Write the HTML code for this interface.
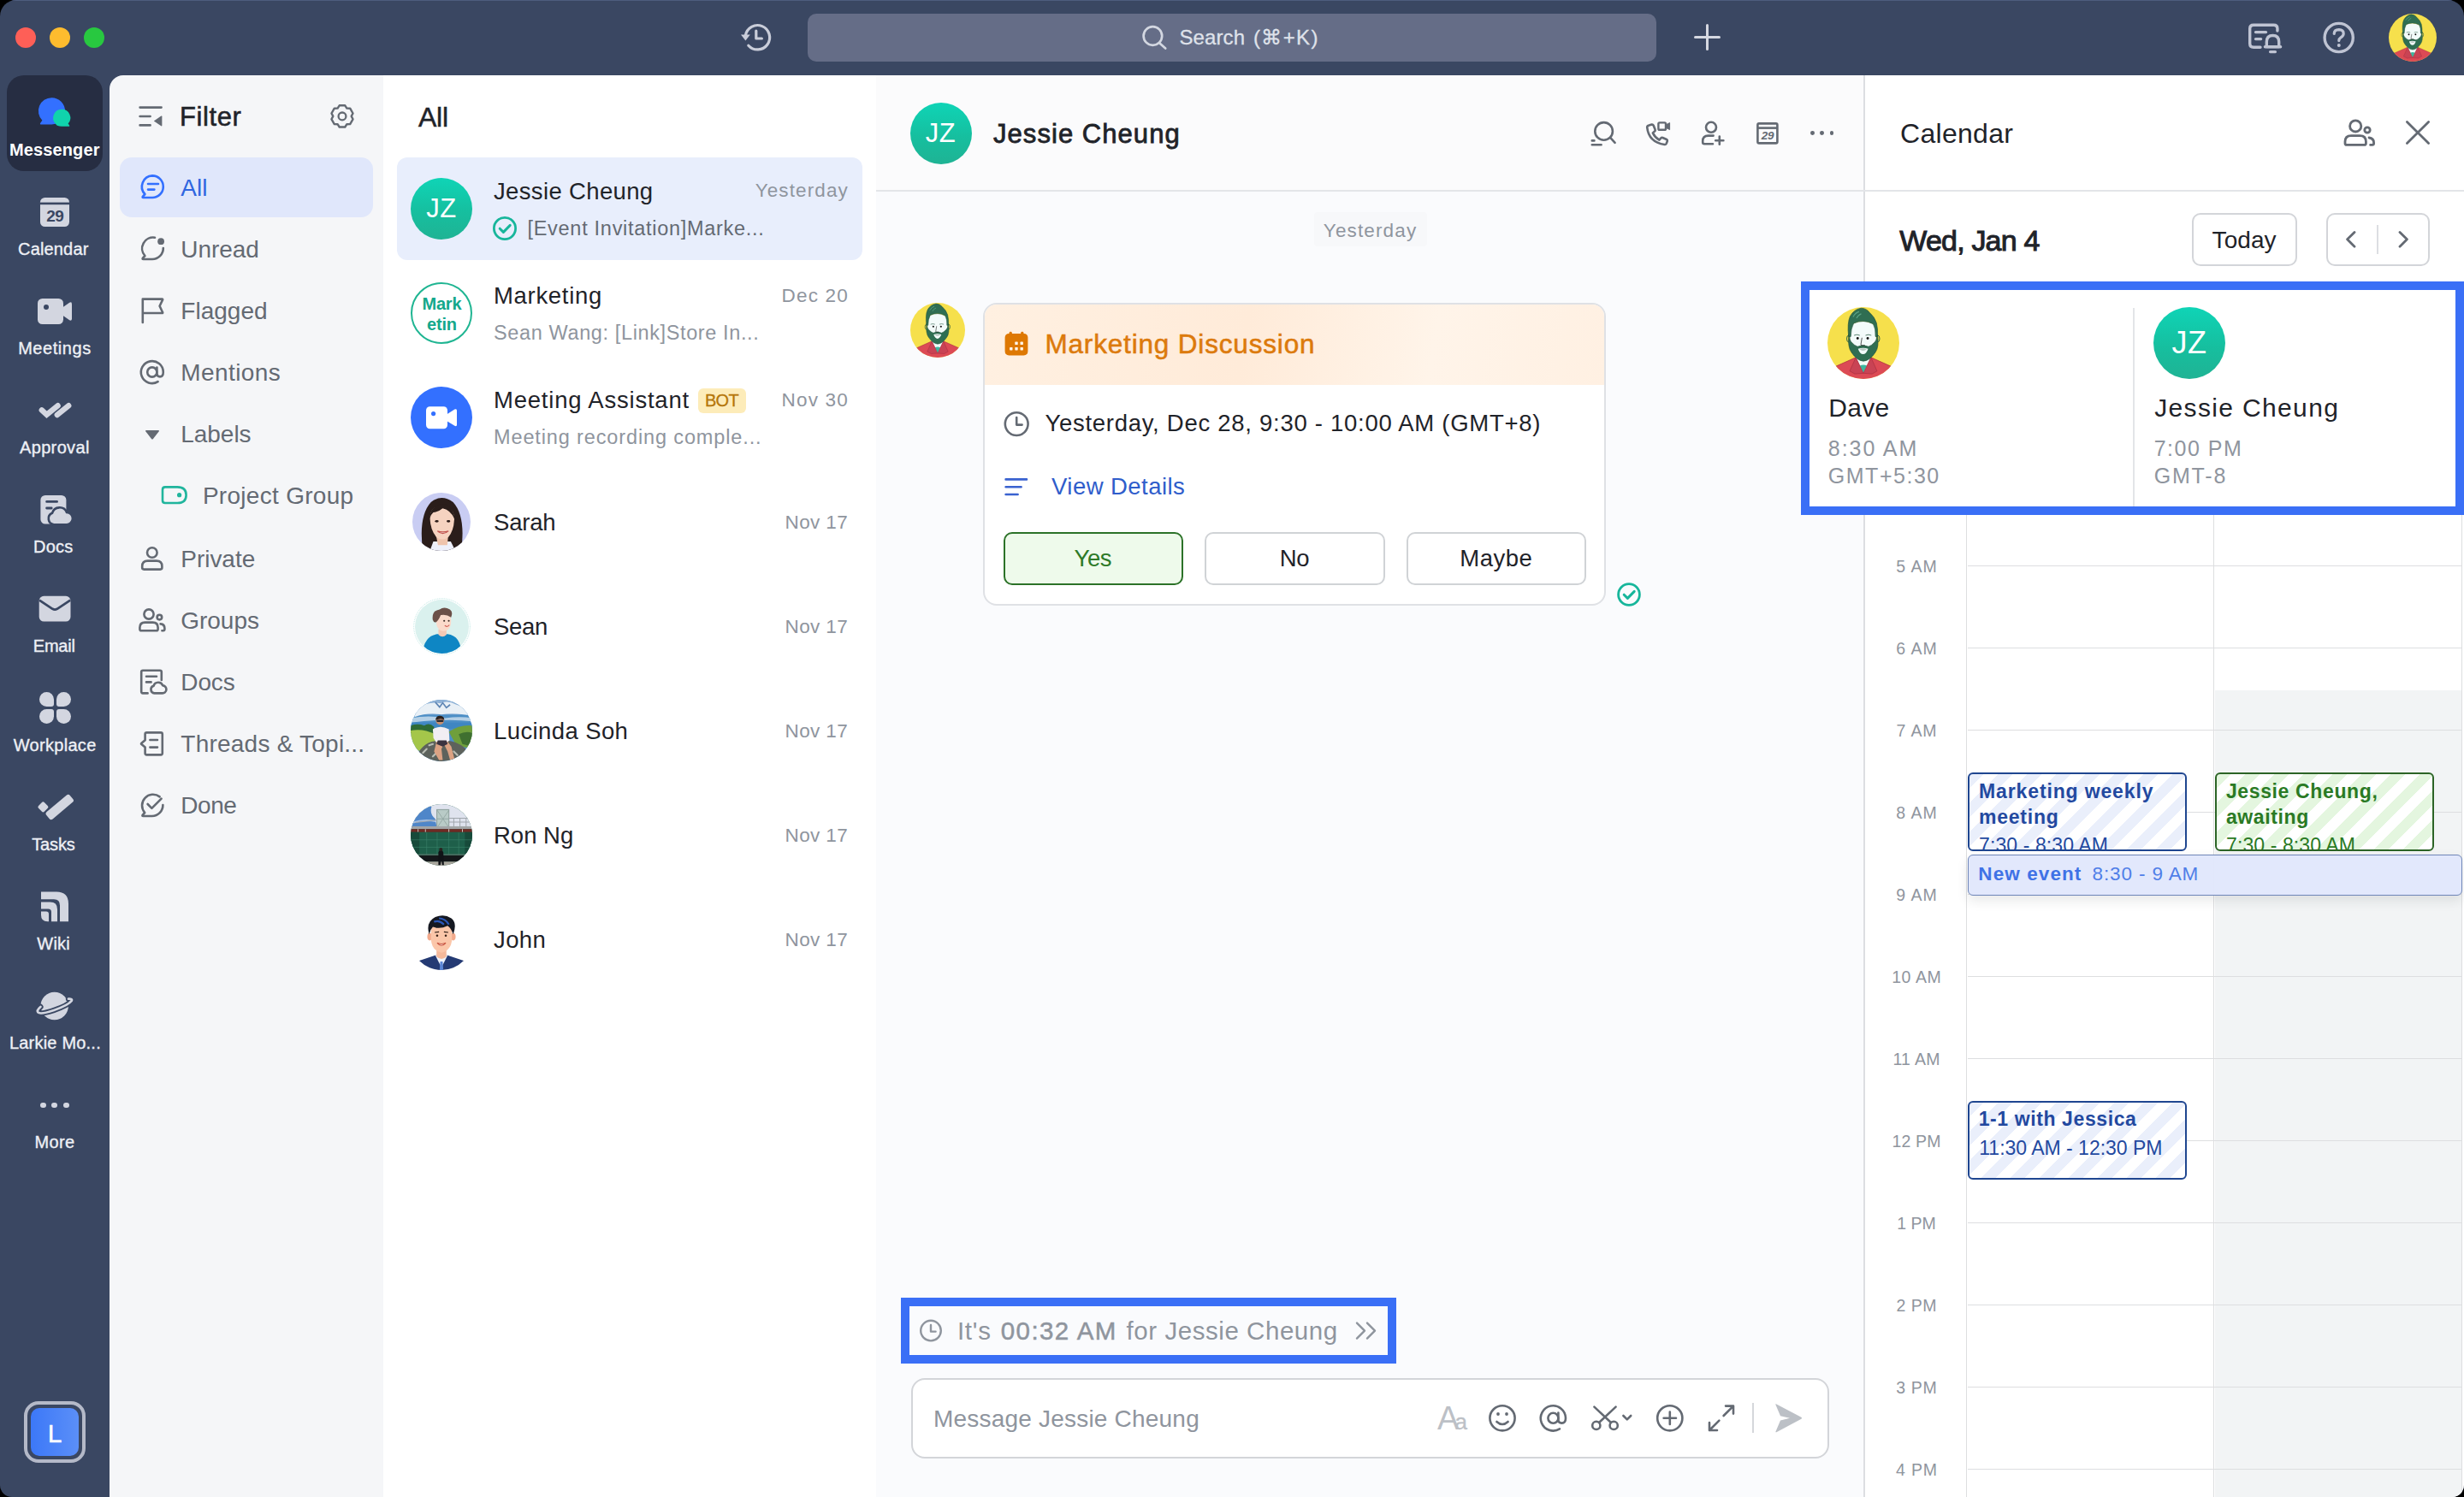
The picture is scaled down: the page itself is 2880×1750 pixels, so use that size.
<!DOCTYPE html>
<html lang="en"><head><meta charset="utf-8"><title>Messenger</title>
<style>
html,body{margin:0;padding:0;background:#000;}
body{width:2880px;height:1750px;overflow:hidden;position:relative;font-family:"Liberation Sans",sans-serif;}
.win{position:absolute;left:0;top:0;width:2880px;height:1750px;background:#3a4762;border-radius:19px 19px 14px 14px;overflow:hidden;}
.win:before{content:"";position:absolute;left:0;top:0;width:100%;height:1px;background:#56668a;opacity:.7}
.a{position:absolute;display:block;}
.t{white-space:nowrap;}
svg{overflow:visible;}
</style></head>
<body><div class="win">
<div class="a" style="left:18px;top:32px;width:24px;height:24px;background:#fe5f57;border-radius:50%;"></div>
<div class="a" style="left:58px;top:32px;width:24px;height:24px;background:#febc2e;border-radius:50%;"></div>
<div class="a" style="left:98px;top:32px;width:24px;height:24px;background:#28c840;border-radius:50%;"></div>
<svg class="a" style="left:860px;top:20px;" width="50" height="48" viewBox="860 20 50 48"><g fill="none" stroke="#c9cdd9" stroke-width="3.2" stroke-linecap="round" stroke-linejoin="round">
<path d="M871.4,41.5 A14.2,14.2 0 1 1 874.8,53.2"/>
<path d="M883.8,36 L883.8,45 L890.4,45"/></g>
<path d="M866,40.4 L876.8,40.4 L871.4,47.4 Z" fill="#c9cdd9"/></svg>
<div class="a" style="left:944px;top:16px;width:992px;height:56px;background:#656d87;border-radius:10px;"></div>
<svg class="a" style="left:1328px;top:24px;" width="42" height="40" viewBox="1328 24 42 40"><g fill="none" stroke="#d3d7e1" stroke-width="2.7" stroke-linecap="round"><circle cx="1347.4" cy="42" r="10.8"/><path d="M1355.4,50.4 L1362.2,56.6"/></g></svg>
<div class="a t" style="top:28.0px;font-size:24px;line-height:31px;color:#dfe2ea;letter-spacing:0.13px;-webkit-text-stroke:0.3px #dfe2ea;left:1378.4px;"><span>Search</span></div>
<div class="a t" style="top:28.0px;font-size:24px;line-height:31px;color:#dfe2ea;letter-spacing:1.36px;-webkit-text-stroke:0.3px #dfe2ea;left:1465px;"><span>(⌘+K)</span></div>
<svg class="a" style="left:1975px;top:24px;" width="40" height="40" viewBox="1975 24 40 40"><path d="M1995.5,29.5 V57.5 M1981.5,43.5 H2009.5" stroke="#d5d8e1" stroke-width="3" stroke-linecap="round" fill="none"/></svg>
<svg class="a" style="left:2620px;top:20px;" width="52" height="48" viewBox="2620 20 52 48"><g fill="none" stroke="#bfc4d3" stroke-width="3.4" stroke-linecap="round" stroke-linejoin="round">
<path d="M2642,55.2 H2634 Q2629.7,55.2 2629.7,51 V33.5 Q2629.7,29.3 2634,29.3 H2657.6 Q2661.9,29.3 2661.9,33.5 V36"/>
<path d="M2636.5,37.6 H2648.5 M2636.5,45.6 H2642.6"/>
<path d="M2656.5,41.5 Q2649.3,41.5 2649.3,49 V54.6 H2663.7 V49 Q2663.7,41.5 2656.5,41.5 Z"/>
<path d="M2647.4,54.8 H2665.6 M2653.6,60.6 H2659.4"/></g></svg>
<svg class="a" style="left:2710px;top:20px;" width="50" height="48" viewBox="2710 20 50 48"><circle cx="2733.7" cy="44" r="16.6" fill="none" stroke="#bfc4d3" stroke-width="3.4"/>
<path d="M2728.2,39.4 Q2728.4,34.6 2733.8,34.6 Q2739.2,34.8 2739.2,39.2 Q2739.2,42 2736,43.8 Q2733.8,45.2 2733.8,47.6" fill="none" stroke="#bfc4d3" stroke-width="3.2" stroke-linecap="round"/>
<circle cx="2733.8" cy="53" r="2" fill="#bfc4d3"/></svg>
<svg class="a" style="left:2792px;top:16px" width="56" height="56" viewBox="0 0 100 100">
<clipPath id="dv1"><circle cx="50" cy="50" r="50"/></clipPath>
<g clip-path="url(#dv1)">
<rect width="100" height="100" fill="#f6e04c"/>
<path d="M8,84 Q26,76 39.5,70 L50,78 L60.5,70 Q74,76 92,84 L92,101 L8,101 Z" fill="#dc4a55" stroke="#a52c3c" stroke-width="0.8"/>
<path d="M39.5,70 L50,92 L60.5,70 L57,62 L43,62 Z" fill="#f2fbf9"/>
<path d="M45,81.5 L50,92 L55,81.5 Q50,79.5 45,81.5 Z" fill="#3db79f"/>
<path d="M39.5,70 L31,89 L38,93 L50,92 Z" fill="#c94354" stroke="#a52c3c" stroke-width="0.7"/>
<path d="M60.5,70 L69,89 L62,93 L50,92 Z" fill="#c94354" stroke="#a52c3c" stroke-width="0.7"/>
<ellipse cx="29.4" cy="44" rx="2.6" ry="4.6" fill="#f6e04c" stroke="#2a5d45" stroke-width="1.1"/>
<ellipse cx="70" cy="44" rx="2.6" ry="4.6" fill="#f6e04c" stroke="#2a5d45" stroke-width="1.1"/>
<path d="M31.5,26 Q49,14 67,26 L68,50 Q66,72 49.5,75 Q33,72 31.5,50 Z" fill="#f3fbfa"/>
<path d="M29.6,38 Q30.5,46 33,48.5 Q38,54 42,55 Q49.4,51.6 57,55 Q61,54 66,48.5 Q68.5,46 69.6,38 Q72,56 66.6,63 Q59,74.6 50,75.2 Q41,74.6 33.4,63 Q28,56 29.6,38 Z" fill="#2f6e52" stroke="#1f5039" stroke-width="0.8"/>
<path d="M42.6,58 Q49.6,55.4 56.6,58 Q54,65.4 49.6,65.6 Q45,65.4 42.6,58 Z" fill="#f3fbfa"/>
<path d="M44.2,58.4 Q49.6,56.6 55,58.4 Q49.6,63 44.2,58.4 Z" fill="#b9c7c3"/>
<path d="M29.4,41 Q27.4,22 31.4,13 Q36.5,3.2 46.8,1.4 Q54,1.6 58.6,7.6 Q65.6,13.6 68.2,22 Q70.2,30 69.8,41 L66.8,41 Q67.4,30 63.6,23.4 Q50,16.4 36.4,22.6 Q32.4,30 32.4,41 Z" fill="#2f6e52" stroke="#1f5039" stroke-width="0.8"/>
<path d="M35.6,13.6 Q39,7.6 44,6.4 M40.4,15.6 Q43,10.6 47,9.4" stroke="#5aa184" stroke-width="1.3" fill="none"/>
<circle cx="42" cy="43.4" r="1.7" fill="#111"/><circle cx="56" cy="43.4" r="1.7" fill="#111"/>
<path d="M37,39.3 Q41,37.4 45,39.3 M53,39.3 Q57,37.4 61,39.3" stroke="#2a5d45" stroke-width="0.9" fill="none"/>
<path d="M48,42.6 L46.4,52.6 Q49,54.4 52,53" stroke="#222" stroke-width="0.9" fill="none"/>
</g></svg>
<div class="a" style="left:8px;top:88px;width:112px;height:112px;background:#262d42;border-radius:20px;"></div>
<div class="a t" style="top:161.8px;font-size:20px;line-height:26px;color:#ffffff;font-weight:700;letter-spacing:0.14px;left:-536.3px;width:1200px;text-align:center;margin-left:0.07px;"><span>Messenger</span></div>
<div class="a t" style="top:277.8px;font-size:20px;line-height:26px;color:#eef0f5;letter-spacing:0.17px;-webkit-text-stroke:0.35px #eef0f5;left:-537.8px;width:1200px;text-align:center;margin-left:0.08px;"><span>Calendar</span></div>
<div class="a t" style="top:393.8px;font-size:20px;line-height:26px;color:#eef0f5;letter-spacing:0.56px;-webkit-text-stroke:0.35px #eef0f5;left:-536.3px;width:1200px;text-align:center;margin-left:0.28px;"><span>Meetings</span></div>
<div class="a t" style="top:509.8px;font-size:20px;line-height:26px;color:#eef0f5;letter-spacing:0.35px;-webkit-text-stroke:0.35px #eef0f5;left:-536.3px;width:1200px;text-align:center;margin-left:0.17px;"><span>Approval</span></div>
<div class="a t" style="top:625.8px;font-size:20px;line-height:26px;color:#eef0f5;letter-spacing:0.21px;-webkit-text-stroke:0.35px #eef0f5;left:-537.9px;width:1200px;text-align:center;margin-left:0.10px;"><span>Docs</span></div>
<div class="a t" style="top:741.8px;font-size:20px;line-height:26px;color:#eef0f5;letter-spacing:-0.24px;-webkit-text-stroke:0.35px #eef0f5;left:-536.7px;width:1200px;text-align:center;margin-left:-0.12px;"><span>Email</span></div>
<div class="a t" style="top:857.8px;font-size:20px;line-height:26px;color:#eef0f5;letter-spacing:0.31px;-webkit-text-stroke:0.35px #eef0f5;left:-536px;width:1200px;text-align:center;margin-left:0.15px;"><span>Workplace</span></div>
<div class="a t" style="top:973.8px;font-size:20px;line-height:26px;color:#eef0f5;letter-spacing:-0.12px;-webkit-text-stroke:0.35px #eef0f5;left:-537.5px;width:1200px;text-align:center;margin-left:-0.06px;"><span>Tasks</span></div>
<div class="a t" style="top:1089.8px;font-size:20px;line-height:26px;color:#eef0f5;letter-spacing:0.18px;-webkit-text-stroke:0.35px #eef0f5;left:-537.5px;width:1200px;text-align:center;margin-left:0.09px;"><span>Wiki</span></div>
<div class="a t" style="top:1205.8px;font-size:20px;line-height:26px;color:#eef0f5;letter-spacing:0.21px;-webkit-text-stroke:0.35px #eef0f5;left:-535.7px;width:1200px;text-align:center;margin-left:0.10px;"><span>Larkie Mo...</span></div>
<div class="a t" style="top:1321.8px;font-size:20px;line-height:26px;color:#eef0f5;letter-spacing:0.33px;-webkit-text-stroke:0.35px #eef0f5;left:-536.1px;width:1200px;text-align:center;margin-left:0.17px;"><span>More</span></div>
<svg class="a" style="left:36px;top:106px;" width="56" height="50" viewBox="36 106 56 50"><path d="M60.4,114.2 A15.6,15.6 0 0 1 60.4,145.4 H48.4 Q46,145.4 47.4,143.4 L49.4,140.8 A15.6,15.6 0 0 1 60.4,114.2 Z" fill="#3370ff"/>
<path d="M72.2,127.8 A10,10 0 0 0 65.2,145 Q66.4,147.8 72.2,147.8 H80 Q82,147.8 80.9,146.2 L79.6,144.6 A10,10 0 0 0 72.2,127.8 Z" fill="#10d3ac"/></svg>
<svg class="a" style="left:40px;top:226px;" width="50" height="44" viewBox="40 226 50 44"><rect x="47" y="231" width="34" height="34" rx="5.5" fill="#d3d6e0"/>
<rect x="47" y="236.6" width="34" height="2.6" fill="#3a4762"/></svg>
<div class="a t" style="top:240.1px;font-size:19px;line-height:25px;color:#3a4762;font-weight:700;left:-535.8px;width:1200px;text-align:center;letter-spacing:-0.5px;"><span>29</span></div>
<svg class="a" style="left:40px;top:344px;" width="50" height="40" viewBox="40 344 50 40"><rect x="44" y="349" width="30" height="30" rx="5.5" fill="#d3d6e0"/>
<path d="M73,359.5 L81.2,353.8 Q84,352.4 84,355.4 V372.6 Q84,375.6 81.2,374.2 L73,368.5 Z" fill="#d3d6e0"/>
<circle cx="54" cy="359" r="3" fill="#3a4762"/></svg>
<svg class="a" style="left:40px;top:464px;" width="50" height="32" viewBox="40 464 50 32"><g stroke="#d3d6e0" stroke-width="6.4" stroke-linecap="round" fill="none">
<path d="M48.8,479.4 L54.6,484.8 L67.6,474.2"/><path d="M66.8,485 L80.2,474.2"/></g></svg>
<svg class="a" style="left:40px;top:574px;" width="50" height="44" viewBox="40 574 50 44"><rect x="47.4" y="579" width="30" height="33.6" rx="5.5" fill="#d3d6e0"/>
<path d="M54.6,586.4 H66.6 M54.6,594 H60.2" stroke="#3a4762" stroke-width="2.8" stroke-linecap="round"/>
<path d="M63,614 A7,7 0 0 1 61,600.6 A9,9 0 0 1 78,599.8 A7,7 0 0 1 77.6,614 Z" fill="#d3d6e0" stroke="#3a4762" stroke-width="2.6" transform="translate(0,-0.8)"/></svg>
<svg class="a" style="left:40px;top:692px;" width="50" height="40" viewBox="40 692 50 40"><rect x="45.7" y="696.8" width="36.8" height="29.8" rx="5.5" fill="#d3d6e0"/>
<path d="M46,701.6 L61.4,711.8 Q64.1,713.4 66.8,711.8 L82.2,701.6" fill="none" stroke="#3a4762" stroke-width="2.8"/></svg>
<div class="a" style="left:45.7px;top:809px;width:17.2px;height:17.2px;background:#d3d6e0;border-radius:8.6px 8.6px 3px 8.6px;"></div>
<div class="a" style="left:65.5px;top:809px;width:17.2px;height:17.2px;background:#d3d6e0;border-radius:8.6px 8.6px 8.6px 3px;"></div>
<div class="a" style="left:45.7px;top:828.8px;width:17.2px;height:17.2px;background:#d3d6e0;border-radius:8.6px 3px 8.6px 8.6px;"></div>
<div class="a" style="left:65.5px;top:828.8px;width:17.2px;height:17.2px;background:#d3d6e0;border-radius:3px 8.6px 8.6px 8.6px;"></div>
<svg class="a" style="left:40px;top:926px;" width="50" height="36" viewBox="40 926 50 36"><rect x="-5.4" y="-14.6" width="10.8" height="36" rx="2.8" transform="translate(69.6,943.6) rotate(50) translate(0,-3.6)" fill="#d3d6e0"/>
<rect x="-4.8" y="-4.8" width="9.6" height="9.6" rx="2" transform="translate(50.4,943.4) rotate(45)" fill="#d3d6e0"/></svg>
<svg class="a" style="left:40px;top:1038px;" width="50" height="44" viewBox="40 1038 50 44"><path d="M48,1042.4 H66 Q80,1042.4 80,1056.4 V1077.3 H70 V1058.4 Q70,1051.2 63,1051.2 H48 Z" fill="#d3d6e0"/>
<path d="M48,1054.6 H58.6 Q67,1054.6 67,1063 V1077.3 H60 V1066 Q60,1062.4 56.4,1062.4 H48 Z" fill="#d3d6e0"/>
<path d="M48,1065.6 H54 Q57,1065.6 57,1068.6 V1077.3 H55.6 Q48,1077.3 48,1069.7 Z" fill="#d3d6e0"/></svg>
<svg class="a" style="left:38px;top:1154px;" width="54" height="46" viewBox="38 1154 54 46"><circle cx="63.7" cy="1176" r="16.2" fill="#d3d6e0"/>
<path d="M47.4,1177 Q42.6,1181 44.4,1183.4 Q47,1186.4 63,1181 Q80,1175 83.6,1170 Q85,1167.4 80,1167.6" fill="none" stroke="#3a4762" stroke-width="6.4" stroke-linecap="round"/>
<path d="M47.4,1177 Q42.6,1181 44.4,1183.4 Q47,1186.4 63,1181 Q80,1175 83.6,1170 Q85,1167.4 80,1167.6" fill="none" stroke="#d3d6e0" stroke-width="2.8" stroke-linecap="round"/></svg>
<div class="a" style="left:46.800000000000004px;top:1288.6px;width:6.8px;height:6.8px;background:#d3d6e0;border-radius:50%;"></div>
<div class="a" style="left:60.4px;top:1288.6px;width:6.8px;height:6.8px;background:#d3d6e0;border-radius:50%;"></div>
<div class="a" style="left:74.0px;top:1288.6px;width:6.8px;height:6.8px;background:#d3d6e0;border-radius:50%;"></div>
<div class="a" style="left:28px;top:1638px;width:72px;height:72px;border-radius:17px;border:4px solid #b4b9c8;box-sizing:border-box;"></div>
<div class="a" style="left:36px;top:1646px;width:56px;height:56px;background:linear-gradient(90deg,#3c78f8,#5b8ff8);border-radius:10px;"></div>
<div class="a t" style="top:1655.5px;font-size:30px;line-height:39px;color:#fff;-webkit-text-stroke:0.4px #fff;left:-536px;width:1200px;text-align:center;"><span>L</span></div>
<div class="a" style="left:128px;top:88px;width:320px;height:1662px;background:#f5f6f8;border-top-left-radius:16px;"></div>
<svg class="a" style="left:156px;top:118px;" width="40" height="36" viewBox="156 118 40 36"><g stroke="#646a73" stroke-width="2.6" stroke-linecap="round" fill="none">
<path d="M163.6,125.6 H188.6 M163.6,136 H175.6 M163.6,146.4 H175.6"/></g>
<path d="M179.8,141.4 L188.4,135.6 Q189.4,135 189.4,136.2 V146.6 Q189.4,147.8 188.4,147.2 Z" fill="#646a73"/></svg>
<div class="a t" style="top:117.2px;font-size:31px;line-height:40px;color:#1f2329;letter-spacing:0.60px;-webkit-text-stroke:0.55px #1f2329;left:210px;"><span>Filter</span></div>
<svg class="a" style="left:380px;top:116px;" width="40" height="40" viewBox="380 116 40 40"><path d="M403.3,123.3 L396.7,123.3 L394.6,126.6 L390.8,126.7 L387.5,132.5 L389.3,135.9 L387.5,139.3 L390.8,145.1 L394.6,145.2 L396.7,148.5 L403.3,148.5 L405.4,145.2 L409.2,145.1 L412.5,139.3 L410.7,135.9 L412.5,132.5 L409.2,126.7 L405.4,126.6 Z" fill="none" stroke="#646a73" stroke-width="2.4" stroke-linejoin="round"/><circle cx="400.0" cy="135.9" r="4.4" fill="none" stroke="#646a73" stroke-width="2.3"/></svg>
<div class="a" style="left:140px;top:184px;width:296px;height:70px;background:#e0e7fb;border-radius:14px;"></div>
<div class="a t" style="top:201.6px;font-size:28px;line-height:36px;color:#2f66e0;letter-spacing:-0.01px;left:211.3px;"><span>All</span></div>
<div class="a t" style="top:273.6px;font-size:28px;line-height:36px;color:#646a73;letter-spacing:-0.07px;left:211.3px;"><span>Unread</span></div>
<div class="a t" style="top:345.6px;font-size:28px;line-height:36px;color:#646a73;letter-spacing:0.02px;left:211.3px;"><span>Flagged</span></div>
<div class="a t" style="top:418.1px;font-size:28px;line-height:36px;color:#646a73;letter-spacing:0.42px;left:211.3px;"><span>Mentions</span></div>
<div class="a t" style="top:490.0px;font-size:28px;line-height:36px;color:#646a73;letter-spacing:-0.05px;left:211.3px;"><span>Labels</span></div>
<div class="a t" style="top:635.9px;font-size:28px;line-height:36px;color:#646a73;letter-spacing:-0.04px;left:211.3px;"><span>Private</span></div>
<div class="a t" style="top:708.4px;font-size:28px;line-height:36px;color:#646a73;letter-spacing:-0.04px;left:211.3px;"><span>Groups</span></div>
<div class="a t" style="top:779.9px;font-size:28px;line-height:36px;color:#646a73;letter-spacing:-0.12px;left:211.3px;"><span>Docs</span></div>
<div class="a t" style="top:852.1px;font-size:28px;line-height:36px;color:#646a73;letter-spacing:0.23px;left:211.3px;"><span>Threads &amp; Topi...</span></div>
<div class="a t" style="top:924.2px;font-size:28px;line-height:36px;color:#646a73;letter-spacing:-0.43px;left:211.3px;"><span>Done</span></div>
<div class="a t" style="top:561.8px;font-size:28px;line-height:36px;color:#646a73;letter-spacing:0.29px;left:236.9px;"><span>Project Group</span></div>
<svg class="a" style="left:160px;top:200px;" width="38" height="38" viewBox="160 200 38 38"><g fill="none" stroke="#3370ff" stroke-width="2.6" stroke-linecap="round" stroke-linejoin="round">
<path d="M178,205.4 A12.8,12.8 0 1 1 178,231 H167.6 Q166,231 167,229.6 L169.4,227 A12.8,12.8 0 0 1 178,205.4 Z"/>
<path d="M173,215 H185 M173,221.6 H180.4"/></g></svg>
<svg class="a" style="left:160px;top:272px;" width="38" height="38" viewBox="160 272 38 38"><g fill="none" stroke="#646a73" stroke-width="2.6" stroke-linecap="round" stroke-linejoin="round">
<path d="M190.8,290 A12.8,12.8 0 0 1 178,303 H167.6 Q166,303 167,301.6 L169.4,299 A12.8,12.8 0 0 1 181,277.8"/></g>
<circle cx="188.1" cy="282.2" r="3.9" fill="#646a73"/></svg>
<svg class="a" style="left:160px;top:344px;" width="38" height="38" viewBox="160 344 38 38"><path d="M166.8,377 V349.6 H189.4 Q190.6,349.6 190,350.6 L186.6,357.8 L190,365 Q190.6,366 189.4,366 H166.8" fill="none" stroke="#646a73" stroke-width="2.6" stroke-linecap="round" stroke-linejoin="round"/></svg>
<svg class="a" style="left:160px;top:416px;" width="38" height="38" viewBox="160 416 38 38"><g fill="none" stroke="#646a73" stroke-width="2.6" stroke-linecap="round">
<circle cx="177.8" cy="435" r="5.6"/>
<path d="M183.4,429.6 V436.6 Q183.4,440.4 187,440.4 Q190.8,440.4 190.8,435 A13,13 0 1 0 184.6,446.2"/></g></svg>
<svg class="a" style="left:164px;top:496px;" width="28" height="24" viewBox="164 496 28 24"><path d="M171,503 H185 Q186.6,503 185.6,504.4 L179,513 Q178,514.2 177,513 L170.4,504.4 Q169.4,503 171,503 Z" fill="#646a73"/></svg>
<svg class="a" style="left:184px;top:562px;" width="40" height="34" viewBox="184 562 40 34"><path d="M193,569.4 H207.4 Q217.6,569.4 217.6,578.7 Q217.6,588 207.4,588 H193 Q190,588 190,585 V572.4 Q190,569.4 193,569.4 Z" fill="none" stroke="#20b59d" stroke-width="2.6"/>
<circle cx="209.6" cy="578.7" r="2.6" fill="#20b59d"/></svg>
<svg class="a" style="left:160px;top:634px;" width="38" height="38" viewBox="160 634 38 38"><g fill="none" stroke="#646a73" stroke-width="2.6" stroke-linejoin="round"><circle cx="177.8" cy="646" r="5.8"/>
<path d="M172.6,655.6 H183 Q189.4,655.6 189.4,662 V663.6 Q189.4,665.6 187.4,665.6 H168.2 Q166.2,665.6 166.2,663.6 V662 Q166.2,655.6 172.6,655.6 Z"/></g></svg>
<svg class="a" style="left:158px;top:706px;" width="42" height="40" viewBox="158 706 42 40"><g fill="none" stroke="#646a73" stroke-width="2.6" stroke-linejoin="round" stroke-linecap="round"><circle cx="174" cy="718" r="5.6"/>
<path d="M169.4,727.6 H178.6 Q184.6,727.6 184.6,733.6 V735.4 Q184.6,737.2 182.8,737.2 H165.2 Q163.4,737.2 163.4,735.4 V733.6 Q163.4,727.6 169.4,727.6 Z"/>
<circle cx="186.4" cy="721.6" r="2.8"/><path d="M187.6,729.4 Q192.4,729.8 192.4,734.6 V735.6 Q192.4,737.2 190.8,737.2 H189.4"/></g></svg>
<svg class="a" style="left:158px;top:778px;" width="42" height="40" viewBox="158 778 42 40"><g fill="none" stroke="#646a73" stroke-width="2.6" stroke-linejoin="round" stroke-linecap="round">
<path d="M172.6,810.4 H167 Q165.2,810.4 165.2,808.6 V785.6 Q165.2,783.8 167,783.8 H187 Q188.8,783.8 188.8,785.6 V795"/>
<path d="M171,790.8 H183 M171,797.4 H176.6"/>
<path d="M180.4,810.4 A4.4,4.4 0 0 1 179.6,801.8 A5.6,5.6 0 0 1 190.2,801.4 A4.5,4.5 0 0 1 189.6,810.4 Z"/></g></svg>
<svg class="a" style="left:158px;top:850px;" width="42" height="40" viewBox="158 850 42 40"><g fill="none" stroke="#646a73" stroke-width="2.6" stroke-linejoin="round" stroke-linecap="round">
<path d="M171.4,856.4 H188 Q189.8,856.4 189.8,858.2 V880.6 Q189.8,882.4 188,882.4 H171.4 Q169.6,882.4 169.6,880.6 V873.6 L165.4,870 Q164.6,869.4 165.4,868.8 L169.6,865.2 V858.2 Q169.6,856.4 171.4,856.4 Z"/>
<path d="M175.4,865 H184 M175.4,873.6 H184"/></g></svg>
<svg class="a" style="left:158px;top:922px;" width="42" height="40" viewBox="158 922 42 40"><g fill="none" stroke="#646a73" stroke-width="2.6" stroke-linecap="round" stroke-linejoin="round">
<path d="M190.4,941 A12.8,12.8 0 0 1 177.6,954 H167.4 Q165.8,954 166.8,952.6 L169.2,950 A12.8,12.8 0 0 1 186.6,931.4"/>
<path d="M172.6,940 L177.4,944.8 L188.6,933.6"/></g></svg>
<div class="a" style="left:448px;top:88px;width:576px;height:1662px;background:#ffffff;"></div>
<div class="a t" style="top:116.1px;font-size:32px;line-height:42px;color:#1f2329;letter-spacing:-0.19px;-webkit-text-stroke:0.5px #1f2329;left:488.9px;"><span>All</span></div>
<div class="a" style="left:464px;top:184px;width:544px;height:120px;background:#e8eefc;border-radius:12px;"></div>
<div class="a" style="left:480px;top:208px;width:72px;height:72px;border-radius:50%;background:linear-gradient(180deg,#0fd4b6 0%,#16bf9f 55%,#1fb394 100%);color:#fff;font-size:31px;line-height:72px;text-align:center;letter-spacing:0.5px">JZ</div>
<div class="a t" style="top:206.3px;font-size:27.5px;line-height:36px;color:#1f2329;letter-spacing:0.35px;left:577px;"><span>Jessie Cheung</span></div>
<div class="a t" style="top:208.4px;font-size:22.5px;line-height:29px;color:#8f959e;letter-spacing:1.11px;left:-209.20000000000005px;width:1200px;text-align:right;margin-left:1.11px;"><span>Yesterday</span></div>
<svg class="a" style="left:572px;top:249px;" width="36" height="36" viewBox="572 249 36 36"><circle cx="590" cy="267" r="12.6" fill="none" stroke="#17b69b" stroke-width="2.8"/>
<path d="M584.2,267.2 L588.4,271.4 L596.2,263.4" fill="none" stroke="#17b69b" stroke-width="3.0" stroke-linecap="round" stroke-linejoin="round"/></svg>
<div class="a t" style="top:251.7px;font-size:23.5px;line-height:31px;color:#646a73;letter-spacing:0.71px;left:616.5px;"><span>[Event Invitation]Marke...</span></div>
<div class="a" style="left:480px;top:330px;width:72px;height:72px;background:#fff;border-radius:50%;border:2.4px solid #1fb592;box-sizing:border-box;"></div>
<div class="a t" style="top:342.5px;font-size:20px;line-height:24px;color:#14a88b;font-weight:700;letter-spacing:-0.18px;left:-83.5px;width:1200px;text-align:center;margin-left:-0.09px;"><span>Mark</span></div>
<div class="a t" style="top:366.5px;font-size:20px;line-height:24px;color:#14a88b;font-weight:700;letter-spacing:-0.14px;left:-83.5px;width:1200px;text-align:center;margin-left:-0.07px;"><span>etin</span></div>
<div class="a t" style="top:328.3px;font-size:27.5px;line-height:36px;color:#1f2329;letter-spacing:0.69px;left:577px;"><span>Marketing</span></div>
<div class="a t" style="top:330.5px;font-size:22.5px;line-height:29px;color:#8f959e;letter-spacing:1.20px;left:-209.20000000000005px;width:1200px;text-align:right;margin-left:1.20px;"><span>Dec 20</span></div>
<div class="a t" style="top:373.5px;font-size:23.5px;line-height:31px;color:#8f959e;letter-spacing:0.62px;left:577px;"><span>Sean Wang: [Link]Store In...</span></div>
<div class="a" style="left:480px;top:452px;width:72px;height:72px;background:#3370ff;border-radius:50%;"></div>
<svg class="a" style="left:494px;top:470px;" width="46" height="36" viewBox="494 470 46 36"><rect x="498" y="475.2" width="25" height="26" rx="4.4" fill="#fff"/>
<path d="M522,484.4 L531.4,478.6 Q534,477.4 534,480 V496.4 Q534,499 531.4,497.8 L522,492 Z" fill="#fff"/>
<circle cx="506.6" cy="483.6" r="2.6" fill="#3370ff"/></svg>
<div class="a t" style="top:450.3px;font-size:27.5px;line-height:36px;color:#1f2329;letter-spacing:0.79px;left:577px;"><span>Meeting Assistant</span></div>
<div class="a" style="left:815.6px;top:453.6px;width:56px;height:29.6px;background:#fdecb9;border-radius:6px;"></div>
<div class="a t" style="top:455.4px;font-size:20px;line-height:26px;color:#b5760a;letter-spacing:-0.71px;-webkit-text-stroke:0.3px #b5760a;left:243.79999999999995px;width:1200px;text-align:center;margin-left:-0.35px;"><span>BOT</span></div>
<div class="a t" style="top:452.5px;font-size:22.5px;line-height:29px;color:#8f959e;letter-spacing:1.20px;left:-209.20000000000005px;width:1200px;text-align:right;margin-left:1.20px;"><span>Nov 30</span></div>
<div class="a t" style="top:495.5px;font-size:23.5px;line-height:31px;color:#8f959e;letter-spacing:0.87px;left:577px;"><span>Meeting recording comple...</span></div>
<svg class="a" style="left:482.0px;top:576.0px" width="68" height="68" viewBox="0 0 100 100">
<clipPath id="av2"><circle cx="50" cy="50" r="50"/></clipPath><g clip-path="url(#av2)">
<rect width="100" height="100" fill="#c9cdf3"/>
<path d="M18,100 Q10,40 32,16 Q50,2 70,16 Q92,40 84,100 Z" fill="#2a1d1a"/>
<path d="M30,100 L36,84 L66,84 L74,100 Z" fill="#eef0fb"/>
<path d="M40,70 L62,70 L60,90 L44,90 Z" fill="#efc4ad"/>
<path d="M30,42 Q32,22 52,22 Q72,24 72,46 Q71,66 62,76 Q52,84 42,77 Q31,66 30,42 Z" fill="#f6d3c0"/>
<path d="M29,46 Q30,22 52,19 Q70,20 73,46 Q66,30 52,27 Q44,34 36,34 Q31,38 29,46 Z" fill="#2a1d1a"/>
<ellipse cx="42" cy="49" rx="3.2" ry="2" fill="#2b1b17"/><ellipse cx="62" cy="49" rx="3.2" ry="2" fill="#2b1b17"/>
<path d="M43,66 Q52,74 62,66 Q52,69 43,66 Z" fill="#fff" stroke="#c2554f" stroke-width="1.6"/>
</g></svg>
<div class="a t" style="top:592.5px;font-size:27.5px;line-height:36px;color:#1f2329;letter-spacing:-0.18px;left:577px;"><span>Sarah</span></div>
<div class="a t" style="top:596.2px;font-size:22.5px;line-height:29px;color:#8f959e;letter-spacing:0.40px;left:-209.20000000000005px;width:1200px;text-align:right;margin-left:0.40px;"><span>Nov 17</span></div>
<svg class="a" style="left:482.5px;top:698.5px" width="67" height="67" viewBox="0 0 100 100">
<clipPath id="av3"><circle cx="50" cy="50" r="47"/></clipPath>
<circle cx="50" cy="50" r="49" fill="#fff" stroke="#9fdcd7" stroke-width="1" stroke-dasharray="1.5 1.5"/>
<g clip-path="url(#av3)">
<rect width="100" height="100" fill="#daf1ee"/>
<path d="M16,100 Q18,66 42,63 L60,63 Q84,66 84,100 Z" fill="#0e86c4"/>
<path d="M44,55 L58,55 L58,64 Q51,71 44,64 Z" fill="#f3c9b5"/>
<path d="M40,34 Q40,24 52,24 Q66,24 66,40 Q66,58 52,58 Q40,56 40,40 Z" fill="#fbdacb"/>
<path d="M34,38 Q32,22 46,20 Q54,14 64,20 Q70,24 66,34 Q58,28 48,30 Q44,40 40,42 Q36,44 34,38 Z" fill="#6b5048"/>
<circle cx="54" cy="40" r="1.6" fill="#3a2a25"/><circle cx="62" cy="40" r="1.6" fill="#3a2a25"/>
<path d="M55,48 Q59,52 63,47" stroke="#d0574f" stroke-width="1.6" fill="none"/>
</g></svg>
<div class="a t" style="top:714.5px;font-size:27.5px;line-height:36px;color:#1f2329;letter-spacing:-0.33px;left:577px;"><span>Sean</span></div>
<div class="a t" style="top:718.2px;font-size:22.5px;line-height:29px;color:#8f959e;letter-spacing:0.40px;left:-209.20000000000005px;width:1200px;text-align:right;margin-left:0.40px;"><span>Nov 17</span></div>
<svg class="a" style="left:480.0px;top:818.0px" width="72" height="72" viewBox="0 0 100 100">
<clipPath id="av4"><circle cx="50" cy="50" r="50"/></clipPath><g clip-path="url(#av4)">
<rect width="100" height="100" fill="#4d8fc6"/>
<rect width="100" height="24" fill="#8fb1d6"/>
<path d="M10,14 Q30,2 48,6 Q60,0 74,8 Q90,12 100,22 L100,26 Q70,20 50,24 Q28,20 6,28 Z" fill="#e9f0f6"/>
<path d="M40,4 L47,12 L52,5 L58,13 L64,8" stroke="#5f86b4" stroke-width="2.4" fill="none"/>
<path d="M0,30 Q30,24 56,30 Q80,26 100,30 L100,35 Q60,30 0,37 Z" fill="#cfe0ee" opacity=".8"/>
<rect y="37" width="100" height="10" fill="#3f86c2"/>
<path d="M0,42 Q12,38 22,42 Q30,36 38,44 L38,56 L0,54 Z" fill="#2f6a34"/>
<path d="M0,50 Q20,46 40,56 L46,72 L20,84 L0,80 Z" fill="#a4c64a"/>
<path d="M62,52 Q80,40 100,42 L100,80 L74,74 Z" fill="#6f9f3c"/>
<path d="M78,56 Q90,50 100,54 L100,76 L84,72 Z" fill="#3f7030"/>
<path d="M8,100 Q12,76 34,68 Q60,62 78,72 Q96,80 96,100 Z" fill="#5d625c"/>
<path d="M20,86 L26,80 M36,92 L42,86 M70,84 L76,90 M82,92 L86,86 M30,74 L36,72" stroke="#b9bdb4" stroke-width="3" stroke-linecap="round"/>
<path d="M36,48 Q48,40 62,48 L63,66 L58,70 L42,70 L37,62 Z" fill="#f1eef3"/>
<circle cx="47.5" cy="34" r="6.6" fill="#c98f70"/>
<path d="M40.4,33 Q41,25.6 48,26 Q54.6,26.4 54.6,33 Q50,28.6 40.4,33 Z" fill="#2a211e"/>
<rect x="42" y="32.6" width="11.4" height="3.4" rx="1.7" fill="#2a2a30"/>
<path d="M42,68 L38,84 L46,98 L52,98 L50,80 L54,72 L60,84 L64,98 L71,96 L66,76 L60,68 Z" fill="#dba283"/>
<path d="M44,66 L58,66 L60,72 L52,76 L42,72 Z" fill="#3a3340"/>
</g></svg>
<div class="a t" style="top:836.5px;font-size:27.5px;line-height:36px;color:#1f2329;letter-spacing:0.40px;left:577px;"><span>Lucinda Soh</span></div>
<div class="a t" style="top:840.2px;font-size:22.5px;line-height:29px;color:#8f959e;letter-spacing:0.40px;left:-209.20000000000005px;width:1200px;text-align:right;margin-left:0.40px;"><span>Nov 17</span></div>
<svg class="a" style="left:480.0px;top:940.0px" width="72" height="72" viewBox="0 0 100 100">
<clipPath id="av5"><circle cx="50" cy="50" r="50"/></clipPath><g clip-path="url(#av5)">
<rect width="100" height="100" fill="#1d5b47"/>
<rect width="100" height="38" fill="#dfe3ee"/>
<path d="M0,40 L0,14 Q16,2 34,4 Q30,16 40,24 L42,36 Z" fill="#4f86c9"/>
<path d="M4,30 Q20,24 42,28" stroke="#c9d6ea" stroke-width="3" fill="none" opacity=".7"/>
<rect x="42.5" y="9" width="19.5" height="30" fill="#b9cbc7" stroke="#93a6a2" stroke-width="1.6"/>
<path d="M43,10 L62,38 M62,10 L43,38 M43,24 H62" stroke="#8fa29f" stroke-width="1.1" fill="none"/>
<path d="M62,23 H94 M62,29 H97 M70,23 V36 M80,23 V36 M90,23 V36 M8,30 L42,26" stroke="#a0a6ac" stroke-width="1.4" fill="none"/>
<rect y="36" width="100" height="4.6" fill="#a2a6a8"/>
<rect y="40.6" width="100" height="5" fill="#6f2a24"/>
<path d="M12,40.6 V45.6 M24,40.6 V45.6 M62,40.6 V45.6 M84,40.6 V45.6" stroke="#c9c4be" stroke-width="1.4"/>
<rect y="45.6" width="100" height="36.4" fill="#1e5f4a"/>
<rect y="45.6" width="14" height="36.4" fill="#184a3b"/><rect x="88" y="45.6" width="12" height="36.4" fill="#184a3b"/>
<path d="M0,58 H100 M0,70 H100 M26,46 V82 M43,46 V82 M62,46 V82 M78,46 V82" stroke="#3f8a70" stroke-width="0.9" opacity=".8"/>
<rect y="81" width="100" height="2.4" fill="#4a6f62"/>
<rect y="83.4" width="100" height="10" fill="#14171a"/>
<rect y="93.4" width="100" height="7" fill="#aaa69d"/>
<path d="M45,78 Q49,70 53,78 L54,99 L51,99 L50,90 L48.4,99 L45,99 Z" fill="#101317"/>
<circle cx="49" cy="73.6" r="2.8" fill="#2a2420"/>
</g></svg>
<div class="a t" style="top:958.5px;font-size:27.5px;line-height:36px;color:#1f2329;letter-spacing:-0.01px;left:577px;"><span>Ron Ng</span></div>
<div class="a t" style="top:962.2px;font-size:22.5px;line-height:29px;color:#8f959e;letter-spacing:0.40px;left:-209.20000000000005px;width:1200px;text-align:right;margin-left:0.40px;"><span>Nov 17</span></div>
<svg class="a" style="left:480.0px;top:1062.0px" width="72" height="72" viewBox="0 0 100 100">
<clipPath id="av6"><circle cx="50" cy="50" r="50"/></clipPath><g clip-path="url(#av6)">
<rect width="100" height="100" fill="#fff"/>
<path d="M10,86 L40,76 L60,76 L90,86 L90,100 L10,100 Z" fill="#243a73"/>
<path d="M40,76 L50,96 L60,76 Z" fill="#eef3fb"/>
<path d="M48,86 L52,86 L53,100 L47,100 Z" fill="#5b86d6"/>
<path d="M42,62 L58,62 L58,78 Q50,86 42,78 Z" fill="#f5b99b"/>
<ellipse cx="31" cy="46" rx="4" ry="6" fill="#f2aa8c"/><ellipse cx="69" cy="46" rx="4" ry="6" fill="#f2aa8c"/>
<path d="M33,36 Q33,24 50,24 Q67,24 67,36 L67,50 Q66,68 50,72 Q34,68 33,50 Z" fill="#fbc6a9"/>
<path d="M30,42 Q24,22 40,14 Q54,8 66,16 Q76,24 69,42 Q66,32 60,28 Q48,34 36,30 Q32,34 30,42 Z" fill="#151821"/>
<path d="M38,22 Q46,18 54,26 M46,16 Q56,16 62,26" stroke="#2b57b8" stroke-width="3" fill="none"/>
<circle cx="43" cy="44" r="1.8" fill="#3a2016"/><circle cx="57" cy="44" r="1.8" fill="#3a2016"/>
<path d="M39,39 L46,38 M54,38 L61,39" stroke="#2a1b14" stroke-width="1.5"/>
<path d="M43,56 Q50,64 57,56 Q50,59 43,56 Z" fill="#fff" stroke="#c9543f" stroke-width="1.4"/>
</g></svg>
<div class="a t" style="top:1080.5px;font-size:27.5px;line-height:36px;color:#1f2329;letter-spacing:0.41px;left:577px;"><span>John</span></div>
<div class="a t" style="top:1084.2px;font-size:22.5px;line-height:29px;color:#8f959e;letter-spacing:0.40px;left:-209.20000000000005px;width:1200px;text-align:right;margin-left:0.40px;"><span>Nov 17</span></div>
<div class="a" style="left:1024px;top:88px;width:1154px;height:1662px;background:#fafbfd;"></div>
<div class="a" style="left:1024px;top:88px;width:1154px;height:134px;background:#fbfbfc;"></div>
<div class="a" style="left:1063.5px;top:119.5px;width:72px;height:72px;border-radius:50%;background:linear-gradient(180deg,#0fd4b6 0%,#16bf9f 55%,#1fb394 100%);color:#fff;font-size:31px;line-height:72px;text-align:center;letter-spacing:0.5px">JZ</div>
<div class="a t" style="top:137.4px;font-size:31px;line-height:40px;color:#1f2329;letter-spacing:1.05px;-webkit-text-stroke:0.8px #1f2329;left:1161px;"><span>Jessie Cheung</span></div>
<svg class="a" style="left:1854px;top:136px;" width="40" height="40" viewBox="1854 136 40 40"><g fill="none" stroke="#646a73" stroke-width="2.6" stroke-linecap="round"><circle cx="1874.6" cy="153.4" r="10.3"/>
<path d="M1882.4,161.2 L1887.6,166.8 M1860.8,164.4 H1863.4 M1860.8,169.2 H1871.6"/></g></svg>
<svg class="a" style="left:1918px;top:136px;" width="40" height="40" viewBox="1918 136 40 40"><g fill="none" stroke="#646a73" stroke-width="2.6" stroke-linecap="round" stroke-linejoin="round">
<path d="M1927.4,146.6 L1930.6,145.6 Q1932,145.4 1932.6,146.6 L1934.6,151.6 Q1935,152.8 1934,153.6 L1931.8,155.4 Q1934.4,160.8 1939.4,163.6 L1941.4,161.4 Q1942.2,160.6 1943.4,161 L1948,163 Q1949.2,163.6 1948.8,165 L1947.6,168 Q1947,169.2 1945.6,169 Q1927,166 1925.2,148.8 Q1925.2,147.2 1927.4,146.6 Z"/></g>
<rect x="1938.4" y="143.4" width="8.6" height="8.4" rx="1.4" fill="none" stroke="#646a73" stroke-width="2.4"/>
<path d="M1947,146 L1951.6,143.6 V151.6 L1947,149.2 Z" fill="#646a73" stroke="#646a73" stroke-width="1" stroke-linejoin="round"/></svg>
<svg class="a" style="left:1982px;top:136px;" width="42" height="40" viewBox="1982 136 42 40"><g fill="none" stroke="#646a73" stroke-width="2.6" stroke-linecap="round" stroke-linejoin="round"><circle cx="2000" cy="148.8" r="6"/>
<path d="M2002.6,158.6 H1996.6 Q1990.2,158.6 1990.2,165 V166.2 Q1990.2,168.2 1992.2,168.2 H2002"/>
<path d="M2009.8,159.6 V168.8 M2005.2,164.2 H2014.4"/></g></svg>
<svg class="a" style="left:2046px;top:136px;" width="40" height="40" viewBox="2046 136 40 40"><g fill="none" stroke="#646a73" stroke-width="2.6" stroke-linejoin="round"><rect x="2054.4" y="144.4" width="23" height="23" rx="1.6"/>
<path d="M2054.4,149.6 H2077.4"/></g></svg>
<div class="a t" style="top:149.8px;font-size:13.5px;line-height:18px;color:#646a73;font-weight:700;left:1466px;width:1200px;text-align:center;letter-spacing:-0.3px;font-style:italic;"><span>29</span></div>
<div class="a" style="left:2116.2px;top:153.1px;width:4.8px;height:4.8px;background:#646a73;border-radius:50%;"></div>
<div class="a" style="left:2127.4px;top:153.1px;width:4.8px;height:4.8px;background:#646a73;border-radius:50%;"></div>
<div class="a" style="left:2138.6px;top:153.1px;width:4.8px;height:4.8px;background:#646a73;border-radius:50%;"></div>
<div class="a" style="left:1536px;top:248px;width:132px;height:40px;background:#f7f8fa;border-radius:4px;"></div>
<div class="a t" style="top:254.9px;font-size:22.5px;line-height:29px;color:#8f959e;letter-spacing:1.14px;left:1001px;width:1200px;text-align:center;margin-left:0.57px;"><span>Yesterday</span></div>
<svg class="a" style="left:1063.5px;top:353.5px" width="64" height="64" viewBox="0 0 100 100">
<clipPath id="dv7"><circle cx="50" cy="50" r="50"/></clipPath>
<g clip-path="url(#dv7)">
<rect width="100" height="100" fill="#f6e04c"/>
<path d="M8,84 Q26,76 39.5,70 L50,78 L60.5,70 Q74,76 92,84 L92,101 L8,101 Z" fill="#dc4a55" stroke="#a52c3c" stroke-width="0.8"/>
<path d="M39.5,70 L50,92 L60.5,70 L57,62 L43,62 Z" fill="#f2fbf9"/>
<path d="M45,81.5 L50,92 L55,81.5 Q50,79.5 45,81.5 Z" fill="#3db79f"/>
<path d="M39.5,70 L31,89 L38,93 L50,92 Z" fill="#c94354" stroke="#a52c3c" stroke-width="0.7"/>
<path d="M60.5,70 L69,89 L62,93 L50,92 Z" fill="#c94354" stroke="#a52c3c" stroke-width="0.7"/>
<ellipse cx="29.4" cy="44" rx="2.6" ry="4.6" fill="#f6e04c" stroke="#2a5d45" stroke-width="1.1"/>
<ellipse cx="70" cy="44" rx="2.6" ry="4.6" fill="#f6e04c" stroke="#2a5d45" stroke-width="1.1"/>
<path d="M31.5,26 Q49,14 67,26 L68,50 Q66,72 49.5,75 Q33,72 31.5,50 Z" fill="#f3fbfa"/>
<path d="M29.6,38 Q30.5,46 33,48.5 Q38,54 42,55 Q49.4,51.6 57,55 Q61,54 66,48.5 Q68.5,46 69.6,38 Q72,56 66.6,63 Q59,74.6 50,75.2 Q41,74.6 33.4,63 Q28,56 29.6,38 Z" fill="#2f6e52" stroke="#1f5039" stroke-width="0.8"/>
<path d="M42.6,58 Q49.6,55.4 56.6,58 Q54,65.4 49.6,65.6 Q45,65.4 42.6,58 Z" fill="#f3fbfa"/>
<path d="M44.2,58.4 Q49.6,56.6 55,58.4 Q49.6,63 44.2,58.4 Z" fill="#b9c7c3"/>
<path d="M29.4,41 Q27.4,22 31.4,13 Q36.5,3.2 46.8,1.4 Q54,1.6 58.6,7.6 Q65.6,13.6 68.2,22 Q70.2,30 69.8,41 L66.8,41 Q67.4,30 63.6,23.4 Q50,16.4 36.4,22.6 Q32.4,30 32.4,41 Z" fill="#2f6e52" stroke="#1f5039" stroke-width="0.8"/>
<path d="M35.6,13.6 Q39,7.6 44,6.4 M40.4,15.6 Q43,10.6 47,9.4" stroke="#5aa184" stroke-width="1.3" fill="none"/>
<circle cx="42" cy="43.4" r="1.7" fill="#111"/><circle cx="56" cy="43.4" r="1.7" fill="#111"/>
<path d="M37,39.3 Q41,37.4 45,39.3 M53,39.3 Q57,37.4 61,39.3" stroke="#2a5d45" stroke-width="0.9" fill="none"/>
<path d="M48,42.6 L46.4,52.6 Q49,54.4 52,53" stroke="#222" stroke-width="0.9" fill="none"/>
</g></svg>
<div class="a" style="left:1149px;top:354px;width:728px;height:354px;background:#ffffff;border-radius:16px;border:2px solid #dfe1e5;box-sizing:border-box;overflow:hidden;"><div style="position:absolute;left:0;top:0;width:100%;height:94px;background:linear-gradient(100deg,#fff0e1 0%,#ffebd9 42%,#fff4e9 72%,#fff0e2 100%)"></div></div>
<svg class="a" style="left:1170px;top:384px;" width="36" height="36" viewBox="1170 384 36 36"><path d="M1179.4,390 H1196.6 Q1201.4,390 1201.4,394.8 V410.6 Q1201.4,415.4 1196.6,415.4 H1179.4 Q1174.6,415.4 1174.6,410.6 V394.8 Q1174.6,390 1179.4,390 Z" fill="#de7802"/>
<rect x="1179.6" y="387.8" width="3.2" height="5.4" rx="1.4" fill="#de7802"/><rect x="1193.2" y="387.8" width="3.2" height="5.4" rx="1.4" fill="#de7802"/>
<g fill="#fff5ea"><rect x="1186.3" y="399.6" width="3.4" height="3.4" rx="0.6"/><rect x="1192.5" y="399.6" width="3.4" height="3.4" rx="0.6"/>
<rect x="1180.1" y="406" width="3.4" height="3.4" rx="0.6"/><rect x="1186.3" y="406" width="3.4" height="3.4" rx="0.6"/><rect x="1192.5" y="406" width="3.4" height="3.4" rx="0.6"/></g></svg>
<div class="a t" style="top:382.3px;font-size:31.5px;line-height:41px;color:#dc7a0c;letter-spacing:0.83px;-webkit-text-stroke:0.55px #dc7a0c;left:1221.4px;"><span>Marketing Discussion</span></div>
<svg class="a" style="left:1170px;top:478px;" width="36" height="36" viewBox="1170 478 36 36"><circle cx="1188.2" cy="495.6" r="13.4" fill="none" stroke="#646a73" stroke-width="2.6"/>
<path d="M1188.2,488 V496.6 H1194.6" fill="none" stroke="#646a73" stroke-width="2.6" stroke-linecap="round" stroke-linejoin="round"/></svg>
<div class="a t" style="top:477.2px;font-size:27.5px;line-height:36px;color:#1f2329;letter-spacing:0.72px;left:1221.4px;"><span>Yesterday, Dec 28, 9:30 - 10:00 AM (GMT+8)</span></div>
<svg class="a" style="left:1170px;top:552px;" width="36" height="36" viewBox="1170 552 36 36"><path d="M1175.6,560.4 H1200 M1175.6,569.2 H1193.6 M1175.6,578 H1189.6" stroke="#3a62d0" stroke-width="2.6" stroke-linecap="round" fill="none"/></svg>
<div class="a t" style="top:551.1px;font-size:27.5px;line-height:36px;color:#2f5dcb;letter-spacing:0.46px;left:1229px;"><span>View Details</span></div>
<div class="a" style="left:1172.5px;top:621.5px;width:210px;height:62.5px;background:#eefaeb;border-radius:10px;border:2.2px solid #2c7228;box-sizing:border-box;"></div>
<div class="a" style="left:1407.5px;top:621.5px;width:211px;height:62.5px;background:#fff;border-radius:10px;border:2px solid #d0d3d6;box-sizing:border-box;"></div>
<div class="a" style="left:1643.5px;top:621.5px;width:210px;height:62.5px;background:#fff;border-radius:10px;border:2px solid #d0d3d6;box-sizing:border-box;"></div>
<div class="a t" style="top:635.4px;font-size:27.5px;line-height:36px;color:#2e7a28;letter-spacing:-0.46px;left:677.5px;width:1200px;text-align:center;margin-left:-0.23px;"><span>Yes</span></div>
<div class="a t" style="top:635.4px;font-size:27.5px;line-height:36px;color:#1f2329;letter-spacing:-0.33px;left:913.2px;width:1200px;text-align:center;margin-left:-0.16px;"><span>No</span></div>
<div class="a t" style="top:635.4px;font-size:27.5px;line-height:36px;color:#1f2329;letter-spacing:0.49px;left:1148.5px;width:1200px;text-align:center;margin-left:0.25px;"><span>Maybe</span></div>
<svg class="a" style="left:1886px;top:677px;" width="36" height="36" viewBox="1886 677 36 36"><circle cx="1904" cy="695" r="12.4" fill="none" stroke="#17b69b" stroke-width="2.8"/>
<path d="M1898.2,695.2 L1902.4,699.4 L1910.2,691.4" fill="none" stroke="#17b69b" stroke-width="3.0" stroke-linecap="round" stroke-linejoin="round"/></svg>
<div class="a" style="left:1053px;top:1517px;width:579px;height:76.5px;border:10px solid #3a6ff6;box-sizing:border-box;"></div>
<svg class="a" style="left:1070px;top:1538px;" width="36" height="36" viewBox="1070 1538 36 36"><circle cx="1088" cy="1555.6" r="11.8" fill="none" stroke="#8f959e" stroke-width="2.4"/>
<path d="M1088,1549 V1556.6 H1093.6" fill="none" stroke="#8f959e" stroke-width="2.4" stroke-linecap="round" stroke-linejoin="round"/></svg>
<div class="a t" style="top:1537.0px;font-size:29.5px;line-height:38px;color:#8f959e;letter-spacing:0.78px;left:1118.9px;"><span>It's</span></div>
<div class="a t" style="top:1537.0px;font-size:29.5px;line-height:38px;color:#8f959e;letter-spacing:1.41px;-webkit-text-stroke:0.5px #8f959e;left:1169.8px;"><span>00:32 AM</span></div>
<div class="a t" style="top:1537.0px;font-size:29.5px;line-height:38px;color:#8f959e;letter-spacing:0.55px;left:1316.6px;"><span>for Jessie Cheung</span></div>
<svg class="a" style="left:1578px;top:1538px;" width="36" height="36" viewBox="1578 1538 36 36"><path d="M1586,1546.6 L1595,1555.6 L1586,1564.6 M1598,1546.6 L1607,1555.6 L1598,1564.6" fill="none" stroke="#8f959e" stroke-width="2.4" stroke-linecap="round" stroke-linejoin="round"/></svg>
<div class="a" style="left:1064.5px;top:1610.5px;width:1073.5px;height:94.5px;background:#fff;border-radius:16px;border:2px solid #d3d5d9;box-sizing:border-box;"></div>
<div class="a t" style="top:1640.8px;font-size:28px;line-height:36px;color:#8f959e;letter-spacing:0.21px;left:1090.9px;"><span>Message Jessie Cheung</span></div>
<div class="a t" style="top:1637.5px;font-size:38px;line-height:40px;color:#bcc0c6;left:1680px;letter-spacing:0;"><span>A</span></div>
<div class="a t" style="top:1647.0px;font-size:26px;line-height:30px;color:#bcc0c6;-webkit-text-stroke:0.3px #bcc0c6;left:1700.5px;"><span>a</span></div>
<svg class="a" style="left:1736px;top:1638px;" width="40" height="40" viewBox="1736 1638 40 40"><g fill="none" stroke="#646a73" stroke-width="2.6" stroke-linecap="round"><circle cx="1756" cy="1657.8" r="14.6"/>
<path d="M1749.4,1662 Q1756,1668 1762.6,1662"/></g><circle cx="1751" cy="1653" r="1.9" fill="#646a73"/><circle cx="1761" cy="1653" r="1.9" fill="#646a73"/></svg>
<svg class="a" style="left:1795px;top:1638px;" width="41" height="40" viewBox="1795 1638 41 40"><g fill="none" stroke="#646a73" stroke-width="2.6" stroke-linecap="round"><circle cx="1815.4" cy="1657.8" r="6"/>
<path d="M1821.4,1651.6 V1659.6 Q1821.4,1663.6 1825.4,1663.6 Q1830,1663.6 1830,1657.8 A14.6,14.6 0 1 0 1823,1670.4"/></g></svg>
<svg class="a" style="left:1855px;top:1638px;" width="57" height="40" viewBox="1855 1638 57 40"><g fill="none" stroke="#646a73" stroke-width="2.6" stroke-linecap="round" stroke-linejoin="round">
<circle cx="1865.8" cy="1666.4" r="4.6"/><circle cx="1886.2" cy="1666.4" r="4.6"/>
<path d="M1869,1663 L1888.6,1644.6 M1883,1663 L1863.4,1644.6"/>
<path d="M1897.4,1655 L1901.8,1659.4 L1906.2,1655"/></g></svg>
<svg class="a" style="left:1932px;top:1638px;" width="40" height="40" viewBox="1932 1638 40 40"><g fill="none" stroke="#646a73" stroke-width="2.6" stroke-linecap="round"><circle cx="1951.8" cy="1657.8" r="14.6"/>
<path d="M1951.8,1650.6 V1665 M1944.6,1657.8 H1959"/></g></svg>
<svg class="a" style="left:1992px;top:1638px;" width="40" height="40" viewBox="1992 1638 40 40"><g fill="none" stroke="#646a73" stroke-width="2.6" stroke-linecap="round" stroke-linejoin="round">
<path d="M2014.6,1655 L2026,1643.6 M2017,1643.6 H2026 V1652.6 M2009.4,1660.6 L1998,1672 M1998,1663 V1672 H2007"/></g></svg>
<div class="a" style="left:2048px;top:1640px;width:2px;height:35px;background:#d5d7db;"></div>
<svg class="a" style="left:2070px;top:1638px;" width="40" height="40" viewBox="2070 1638 40 40"><path d="M2075.6,1642.4 Q2074.6,1641 2076.4,1641.4 L2105.4,1656.8 Q2107,1657.8 2105.4,1658.8 L2076.4,1674.2 Q2074.6,1674.6 2075.6,1673.2 L2081,1660.4 L2092,1657.8 L2081,1655.2 Z" fill="#bcc0c6"/></svg>
<div class="a" style="left:2180px;top:88px;width:700px;height:1662px;background:#ffffff;"></div>
<div class="a" style="left:2178px;top:88px;width:2px;height:1662px;background:#dcdee2;"></div>
<div class="a" style="left:1024px;top:222px;width:1856px;height:2px;background:#e3e5e8;"></div>
<div class="a t" style="top:135.2px;font-size:32px;line-height:42px;color:#1f2329;letter-spacing:0.29px;left:2221px;"><span>Calendar</span></div>
<svg class="a" style="left:2734px;top:134px;" width="48" height="44" viewBox="2734 134 48 44"><g fill="none" stroke="#646a73" stroke-width="2.8" stroke-linejoin="round" stroke-linecap="round"><circle cx="2753.2" cy="147.4" r="6.6"/>
<path d="M2748,158.6 H2758.4 Q2765.4,158.6 2765.4,165.6 V167.4 Q2765.4,169.4 2763.4,169.4 H2743 Q2741,169.4 2741,167.4 V165.6 Q2741,158.6 2748,158.6 Z"/>
<circle cx="2767" cy="152" r="3.2"/><path d="M2769,161 Q2774.6,161.6 2774.6,167 V167.6 Q2774.6,169.4 2772.8,169.4 H2770.6"/></g></svg>
<svg class="a" style="left:2806px;top:136px;" width="40" height="40" viewBox="2806 136 40 40"><path d="M2813.4,142.4 L2838.6,167.6 M2838.6,142.4 L2813.4,167.6" stroke="#646a73" stroke-width="2.8" stroke-linecap="round" fill="none"/></svg>
<div class="a t" style="top:258.6px;font-size:34px;line-height:44px;color:#1f2329;letter-spacing:-0.81px;-webkit-text-stroke:1.0px #1f2329;left:2220.3px;"><span>Wed, Jan 4</span></div>
<div class="a" style="left:2562px;top:249px;width:123px;height:62px;background:#fff;border-radius:10px;border:2px solid #d3d5d9;box-sizing:border-box;"></div>
<div class="a t" style="top:262.7px;font-size:28px;line-height:36px;color:#1f2329;letter-spacing:0.06px;left:2023.1px;width:1200px;text-align:center;margin-left:0.03px;"><span>Today</span></div>
<div class="a" style="left:2719px;top:249px;width:121px;height:62px;background:#fff;border-radius:10px;border:2px solid #d3d5d9;box-sizing:border-box;"></div>
<div class="a" style="left:2778px;top:263px;width:2px;height:34px;background:#dcdee2;"></div>
<svg class="a" style="left:2730px;top:262px;" width="100" height="36" viewBox="2730 262 100 36"><path d="M2752,271.4 L2743.6,279.8 L2752,288.2 M2805,271.4 L2813.4,279.8 L2805,288.2" fill="none" stroke="#646a73" stroke-width="2.8" stroke-linecap="round" stroke-linejoin="round"/></svg>
<div class="a" style="left:2298px;top:600px;width:1px;height:1150px;background:#dddee0;"></div>
<div class="a" style="left:2587px;top:600px;width:1px;height:1150px;background:#dddee0;"></div>
<div class="a" style="left:2876.5px;top:600px;width:1px;height:1150px;background:#dddee0;"></div>
<div class="a" style="left:2589px;top:807px;width:287.5px;height:943px;background:#f2f4f5;"></div>
<div class="a" style="left:2300px;top:661px;width:578px;height:1px;background:#dddee0;"></div>
<div class="a t" style="top:650.4px;font-size:19.5px;line-height:25px;color:#8f959e;letter-spacing:0.99px;left:1640px;width:1200px;text-align:center;margin-left:0.50px;"><span>5 AM</span></div>
<div class="a" style="left:2300px;top:757px;width:578px;height:1px;background:#dddee0;"></div>
<div class="a t" style="top:746.4px;font-size:19.5px;line-height:25px;color:#8f959e;letter-spacing:1.04px;left:1640px;width:1200px;text-align:center;margin-left:0.52px;"><span>6 AM</span></div>
<div class="a" style="left:2300px;top:853px;width:578px;height:1px;background:#dddee0;"></div>
<div class="a t" style="top:842.4px;font-size:19.5px;line-height:25px;color:#8f959e;letter-spacing:0.89px;left:1640px;width:1200px;text-align:center;margin-left:0.45px;"><span>7 AM</span></div>
<div class="a" style="left:2300px;top:949px;width:578px;height:1px;background:#dddee0;"></div>
<div class="a t" style="top:938.4px;font-size:19.5px;line-height:25px;color:#8f959e;letter-spacing:1.04px;left:1640px;width:1200px;text-align:center;margin-left:0.52px;"><span>8 AM</span></div>
<div class="a" style="left:2300px;top:1045px;width:578px;height:1px;background:#dddee0;"></div>
<div class="a t" style="top:1034.4px;font-size:19.5px;line-height:25px;color:#8f959e;letter-spacing:1.04px;left:1640px;width:1200px;text-align:center;margin-left:0.52px;"><span>9 AM</span></div>
<div class="a" style="left:2300px;top:1141px;width:578px;height:1px;background:#dddee0;"></div>
<div class="a t" style="top:1130.4px;font-size:19.5px;line-height:25px;color:#8f959e;letter-spacing:0.58px;left:1640px;width:1200px;text-align:center;margin-left:0.29px;"><span>10 AM</span></div>
<div class="a" style="left:2300px;top:1237px;width:578px;height:1px;background:#dddee0;"></div>
<div class="a t" style="top:1226.4px;font-size:19.5px;line-height:25px;color:#8f959e;letter-spacing:0.35px;left:1640px;width:1200px;text-align:center;margin-left:0.18px;"><span>11 AM</span></div>
<div class="a" style="left:2300px;top:1333px;width:578px;height:1px;background:#dddee0;"></div>
<div class="a t" style="top:1322.4px;font-size:19.5px;line-height:25px;color:#8f959e;letter-spacing:0.19px;left:1640px;width:1200px;text-align:center;margin-left:0.09px;"><span>12 PM</span></div>
<div class="a" style="left:2300px;top:1429px;width:578px;height:1px;background:#dddee0;"></div>
<div class="a t" style="top:1418.4px;font-size:19.5px;line-height:25px;color:#8f959e;letter-spacing:0.02px;left:1640px;width:1200px;text-align:center;margin-left:0.01px;"><span>1 PM</span></div>
<div class="a" style="left:2300px;top:1525px;width:578px;height:1px;background:#dddee0;"></div>
<div class="a t" style="top:1514.4px;font-size:19.5px;line-height:25px;color:#8f959e;letter-spacing:0.57px;left:1640px;width:1200px;text-align:center;margin-left:0.29px;"><span>2 PM</span></div>
<div class="a" style="left:2300px;top:1621px;width:578px;height:1px;background:#dddee0;"></div>
<div class="a t" style="top:1610.4px;font-size:19.5px;line-height:25px;color:#8f959e;letter-spacing:0.62px;left:1640px;width:1200px;text-align:center;margin-left:0.31px;"><span>3 PM</span></div>
<div class="a" style="left:2300px;top:1717px;width:578px;height:1px;background:#dddee0;"></div>
<div class="a t" style="top:1706.4px;font-size:19.5px;line-height:25px;color:#8f959e;letter-spacing:0.77px;left:1640px;width:1200px;text-align:center;margin-left:0.39px;"><span>4 PM</span></div>
<div class="a" style="left:2300px;top:903px;width:256px;height:91.5px;border-radius:6px;border:2.2px solid #1f4690;box-sizing:border-box;overflow:hidden;background:repeating-linear-gradient(135deg,#eaeffb 0 12px,#ffffff 12px 24px);"></div>
<div class="a" style="left:2589px;top:903px;width:256px;height:91.5px;border-radius:6px;border:2.2px solid #2c6426;box-sizing:border-box;overflow:hidden;background:repeating-linear-gradient(135deg,#e4f6df 0 12px,#ffffff 12px 24px);"></div>
<div class="a" style="left:2300px;top:1287px;width:256px;height:92px;border-radius:6px;border:2.2px solid #1f4690;box-sizing:border-box;overflow:hidden;background:repeating-linear-gradient(135deg,#eaeffb 0 12px,#ffffff 12px 24px);"></div>
<div class="a t" style="top:909.8px;font-size:23px;line-height:30px;color:#2349a0;font-weight:700;letter-spacing:0.86px;left:2313.1px;"><span>Marketing weekly</span></div>
<div class="a t" style="top:939.8px;font-size:23px;line-height:30px;color:#2349a0;font-weight:700;letter-spacing:0.74px;left:2313.1px;"><span>meeting</span></div>
<div class="a t" style="top:909.8px;font-size:23px;line-height:30px;color:#2a7a24;font-weight:700;letter-spacing:0.63px;left:2601.9px;"><span>Jessie Cheung,</span></div>
<div class="a t" style="top:939.8px;font-size:23px;line-height:30px;color:#2a7a24;font-weight:700;letter-spacing:0.62px;left:2601.9px;"><span>awaiting</span></div>
<div class="a" style="left:2303px;top:970px;width:250px;height:22.6px;overflow:hidden;"><div class="t" style="position:absolute;left:10px;top:3.2px;font-size:23px;line-height:30px;color:#2349a0;letter-spacing:0.1px;white-space:nowrap">7:30 - 8:30 AM</div></div>
<div class="a" style="left:2592px;top:970px;width:250px;height:22.6px;overflow:hidden;"><div class="t" style="position:absolute;left:10px;top:3.2px;font-size:23px;line-height:30px;color:#2a7a24;letter-spacing:0.1px;white-space:nowrap">7:30 - 8:30 AM</div></div>
<div class="a t" style="top:1293.4px;font-size:23px;line-height:30px;color:#2349a0;font-weight:700;letter-spacing:0.60px;left:2312.7px;"><span>1-1 with Jessica</span></div>
<div class="a t" style="top:1326.8px;font-size:23px;line-height:30px;color:#2349a0;letter-spacing:-0.01px;left:2313.3px;"><span>11:30 AM - 12:30 PM</span></div>
<div class="a" style="left:2300px;top:999px;width:578px;height:48px;background:rgba(224,231,252,0.94);border-radius:6px;border:1.2px solid #6f86b8;box-sizing:border-box;box-shadow:0 6px 14px rgba(31,35,41,0.10);"></div>
<div class="a t" style="top:1006.5px;font-size:22.5px;line-height:29px;color:#3f72e6;font-weight:700;letter-spacing:1.09px;left:2312.3px;"><span>New event</span></div>
<div class="a t" style="top:1006.5px;font-size:22.5px;line-height:29px;color:#4f7ee8;letter-spacing:0.86px;left:2445.6px;"><span>8:30 - 9 AM</span></div>
<div class="a" style="left:2115px;top:339px;width:755px;height:253px;background:#ffffff;"></div>
<div class="a" style="left:2105px;top:329px;width:775px;height:273px;border:10px solid #3a6ff6;box-sizing:border-box;"></div>
<div class="a" style="left:2493px;top:360px;width:2px;height:232px;background:#e3e5e8;"></div>
<svg class="a" style="left:2135.6px;top:359px" width="84" height="84" viewBox="0 0 100 100">
<clipPath id="dv8"><circle cx="50" cy="50" r="50"/></clipPath>
<g clip-path="url(#dv8)">
<rect width="100" height="100" fill="#f6e04c"/>
<path d="M8,84 Q26,76 39.5,70 L50,78 L60.5,70 Q74,76 92,84 L92,101 L8,101 Z" fill="#dc4a55" stroke="#a52c3c" stroke-width="0.8"/>
<path d="M39.5,70 L50,92 L60.5,70 L57,62 L43,62 Z" fill="#f2fbf9"/>
<path d="M45,81.5 L50,92 L55,81.5 Q50,79.5 45,81.5 Z" fill="#3db79f"/>
<path d="M39.5,70 L31,89 L38,93 L50,92 Z" fill="#c94354" stroke="#a52c3c" stroke-width="0.7"/>
<path d="M60.5,70 L69,89 L62,93 L50,92 Z" fill="#c94354" stroke="#a52c3c" stroke-width="0.7"/>
<ellipse cx="29.4" cy="44" rx="2.6" ry="4.6" fill="#f6e04c" stroke="#2a5d45" stroke-width="1.1"/>
<ellipse cx="70" cy="44" rx="2.6" ry="4.6" fill="#f6e04c" stroke="#2a5d45" stroke-width="1.1"/>
<path d="M31.5,26 Q49,14 67,26 L68,50 Q66,72 49.5,75 Q33,72 31.5,50 Z" fill="#f3fbfa"/>
<path d="M29.6,38 Q30.5,46 33,48.5 Q38,54 42,55 Q49.4,51.6 57,55 Q61,54 66,48.5 Q68.5,46 69.6,38 Q72,56 66.6,63 Q59,74.6 50,75.2 Q41,74.6 33.4,63 Q28,56 29.6,38 Z" fill="#2f6e52" stroke="#1f5039" stroke-width="0.8"/>
<path d="M42.6,58 Q49.6,55.4 56.6,58 Q54,65.4 49.6,65.6 Q45,65.4 42.6,58 Z" fill="#f3fbfa"/>
<path d="M44.2,58.4 Q49.6,56.6 55,58.4 Q49.6,63 44.2,58.4 Z" fill="#b9c7c3"/>
<path d="M29.4,41 Q27.4,22 31.4,13 Q36.5,3.2 46.8,1.4 Q54,1.6 58.6,7.6 Q65.6,13.6 68.2,22 Q70.2,30 69.8,41 L66.8,41 Q67.4,30 63.6,23.4 Q50,16.4 36.4,22.6 Q32.4,30 32.4,41 Z" fill="#2f6e52" stroke="#1f5039" stroke-width="0.8"/>
<path d="M35.6,13.6 Q39,7.6 44,6.4 M40.4,15.6 Q43,10.6 47,9.4" stroke="#5aa184" stroke-width="1.3" fill="none"/>
<circle cx="42" cy="43.4" r="1.7" fill="#111"/><circle cx="56" cy="43.4" r="1.7" fill="#111"/>
<path d="M37,39.3 Q41,37.4 45,39.3 M53,39.3 Q57,37.4 61,39.3" stroke="#2a5d45" stroke-width="0.9" fill="none"/>
<path d="M48,42.6 L46.4,52.6 Q49,54.4 52,53" stroke="#222" stroke-width="0.9" fill="none"/>
</g></svg>
<div class="a" style="left:2517px;top:359px;width:84px;height:84px;border-radius:50%;background:linear-gradient(180deg,#0fd4b6 0%,#16bf9f 55%,#1fb394 100%);color:#fff;font-size:36px;line-height:84px;text-align:center;letter-spacing:0.5px">JZ</div>
<div class="a t" style="top:457.1px;font-size:30px;line-height:39px;color:#1f2329;letter-spacing:0.29px;left:2137.3px;"><span>Dave</span></div>
<div class="a t" style="top:457.1px;font-size:30px;line-height:39px;color:#1f2329;letter-spacing:1.35px;left:2518.2px;"><span>Jessie Cheung</span></div>
<div class="a t" style="top:508.3px;font-size:25px;line-height:32px;color:#8f959e;letter-spacing:1.97px;left:2136.8px;"><span>8:30 AM</span></div>
<div class="a t" style="top:540.0px;font-size:25px;line-height:32px;color:#8f959e;letter-spacing:1.52px;left:2136.8px;"><span>GMT+5:30</span></div>
<div class="a t" style="top:508.3px;font-size:25px;line-height:32px;color:#8f959e;letter-spacing:1.50px;left:2517.7px;"><span>7:00 PM</span></div>
<div class="a t" style="top:540.0px;font-size:25px;line-height:32px;color:#8f959e;letter-spacing:1.82px;left:2517.7px;"><span>GMT-8</span></div>
</div></body></html>
